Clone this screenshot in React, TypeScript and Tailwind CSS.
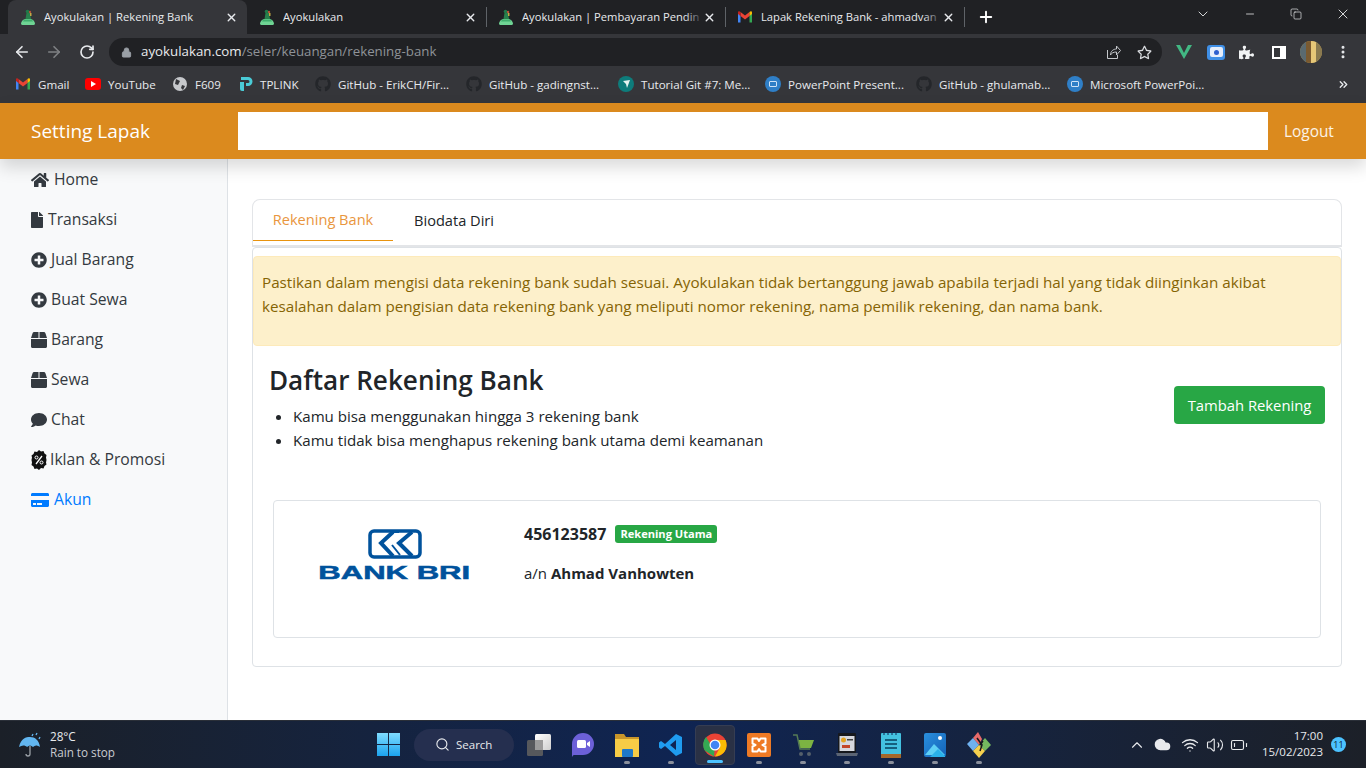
import React from "react";
import { FaHome, FaFile, FaPlusCircle, FaBox, FaComment, FaCreditCard, FaGithub, FaPuzzlePiece, FaRegStar } from "react-icons/fa";
import { ArrowLeft, ArrowRight, RotateCw, Lock, X, Plus, ChevronDown, Minus, Copy, MoreVertical, ChevronsRight, Search, ChevronUp, Wifi, Volume2, BatteryLow, Cloud } from "lucide-react";

function Fav() {
  return (
    <svg width="16" height="16" viewBox="0 0 16 16" className="shrink-0">
      <path d="M1 15c0-2 1-3 2-4l2-1h6l2 1c1 1 2 2 2 4 0 .500-1 1-2 1H3c-1 0-2-.500-2-1z" fill="#6fd494" />
      <path d="M4 10.500h8l1 2H3z" fill="#3fae6c" />
      <path d="M5.500 10l1-6 3.500-.500 1 6.500z" fill="#27804c" />
      <circle cx="7.500" cy="2.500" r="1.800" fill="#1f7a48" />
      <circle cx="10" cy="3" r="1.200" fill="#b5533c" />
      <rect x="10" y="4" width="1.500" height="3" fill="#c2a745" />
    </svg>
  );
}
function GmailIcon() {
  return (
    <svg width="16" height="16" viewBox="0 0 16 16" className="shrink-0">
      <path d="M1 3.500v10h2.500V7L1 3.500z" fill="#4285f4" />
      <path d="M15 3.500v10h-2.500V7L15 3.500z" fill="#34a853" />
      <path d="M3.500 7V3L8 6.500 12.500 3v4L8 10.500 3.500 7z" fill="#ea4335" />
      <path d="M1 3.500C1 2.200 2.500 1.800 3.500 3v4L1 5z" fill="#c5221f" />
      <path d="M15 3.500c0-1.300-1.500-1.700-2.500-.5v4L15 5z" fill="#fbbc04" />
    </svg>
  );
}
function Tab({ title, active, fav, sep, fade }: { title: string; active?: boolean; fav: React.ReactNode; sep?: boolean; fade?: boolean }) {
  return (
    <div className={`w-[239px] flex items-center relative pl-[12px] pr-[9px] gap-[8px] shrink-0 ${active ? "self-end h-[34px] bg-[#35363a] rounded-t-[8px]" : "h-[26px]"}`}>
      {fav}
      <div className="flex-1 relative overflow-hidden whitespace-nowrap text-[11.200px] text-[#e8eaed]">
        {title}
        {fade && <div className="absolute right-0 top-0 bottom-0 w-[18px] bg-gradient-to-r from-transparent to-[#202124]" />}
      </div>
      <X size={13} strokeWidth={2.500} className="text-[#e8eaed] shrink-0 ml-[-8px]" />
      {sep && <div className="absolute right-[-1px] top-[3px] h-[20px] w-px bg-[#5f6368]" />}
    </div>
  );
}
function Bookmark({ icon, label, w }: { icon: React.ReactNode; label: string; w: string }) {
  return (
    <div className={`flex items-center gap-[7px] shrink-0 ${w}`}>
      {icon}
      <span className="text-[11.600px] text-[#e8eaed] whitespace-nowrap">{label}</span>
    </div>
  );
}
function PP() {
  return (
    <div className="w-[16px] h-[16px] rounded-full bg-[#2f7fc7] flex items-center justify-center shrink-0">
      <div className="w-[8px] h-[6px] border border-[#cfe3f7] rounded-[1px]" />
    </div>
  );
}
const Gh = () => <FaGithub size={16} className="text-[#24262a] shrink-0" />;

function Side({ icon, label, gap, active }: { icon: React.ReactNode; label: string; gap: string; active?: boolean }) {
  return (
    <div className={`h-[40px] flex items-center pl-[31px] ${gap} text-[15.700px] font-medium ${active ? "text-[#007bff]" : "text-[#343a40]"}`}>
      {icon}
      <span>{label}</span>
    </div>
  );
}
function PromoIcon() {
  return (
    <svg width="16" height="20" viewBox="0 0 16 20" className="shrink-0">
      <path d="M8 0l2 1.500 2.500-.5 1 2.500 2 1.500-.5 2.500.5 2.500-.5 2.500.5 2-2 1.500-1 2.500-2.500-.5L8 20l-2-1.500-2.500.5-1-2.500-2-1.500.5-2.500-.5-2.500.5-2.500-.5-2 2-1.500 1-2.500 2.500.5z" fill="#111" />
      <circle cx="5.500" cy="7.500" r="1.500" fill="none" stroke="#fff" strokeWidth="1" />
      <circle cx="10.500" cy="12.500" r="1.500" fill="none" stroke="#fff" strokeWidth="1" />
      <path d="M11 6l-6 8" stroke="#fff" strokeWidth="1.300" />
    </svg>
  );
}
function BriLogo() {
  return (
    <div className="w-[151px] flex flex-col items-center">
      <svg width="54" height="30" viewBox="0 0 54 30">
        <rect x="2" y="2" width="50" height="26" rx="4" fill="#fff" stroke="#00529c" strokeWidth="3.500" />
        <path d="M25 3L13 14l12 13" fill="none" stroke="#00529c" strokeWidth="4" />
        <path d="M44 3L31 14l13 13" fill="none" stroke="#00529c" strokeWidth="4" />
        <path d="M25 3h6M24 16l8 10" fill="none" stroke="#00529c" strokeWidth="2" />
      </svg>
      <div className="w-full flex justify-center mt-[7px] h-[14px]">
        <span className="text-[18.500px] leading-[14px] font-bold text-[#00529c] whitespace-nowrap font-['Liberation_Sans',sans-serif] [transform:scaleX(1.680)] [-webkit-text-stroke:0.500px_#00529c]">BANK BRI</span>
      </div>
    </div>
  );
}
function TaskIcon({ children, active, dot = true }: { children: React.ReactNode; active?: boolean; dot?: boolean }) {
  return (
    <div className={`relative w-[40px] h-[40px] flex items-center justify-center shrink-0 rounded-[4px] ${active ? "bg-[#2a3145] border border-[#363d52]" : ""}`}>
      {children}
      {dot && <div className={`absolute bottom-[1px] left-1/2 -translate-x-1/2 h-[3px] rounded-full ${active ? "w-[16px] bg-[#4cc2ff]" : "w-[6px] bg-[#8a8f9b]"}`} />}
    </div>
  );
}

export default function App() {
  return (
    <div className="w-[1366px] h-[768px] overflow-hidden flex flex-col bg-white font-['Open_Sans','Noto_Sans',sans-serif]">
      {/* tabs */}
      <div className="h-[34px] bg-[#202124] flex items-end pl-[8px] shrink-0">
        <Tab title="Ayokulakan | Rekening Bank" active fav={<Fav />} />
        <div className="flex items-center h-[34px]">
          <Tab title="Ayokulakan" fav={<Fav />} sep />
          <Tab title="Ayokulakan | Pembayaran Pendin" fade fav={<Fav />} sep />
          <Tab title="Lapak Rekening Bank - ahmadvan" fade fav={<GmailIcon />} sep />
          <Plus size={18} strokeWidth={2.500} className="text-white ml-[13px]" />
        </div>
        <div className="flex-1" />
        <div className="flex items-center h-full self-start pb-[6px] text-[#f1f3f4]">
          <ChevronDown size={16} strokeWidth={1.300} className="mr-[33px]" />
          <Minus size={12} strokeWidth={1.500} className="mr-[34px]" />
          <Copy size={12} strokeWidth={1.300} className="mr-[33px]" />
          <X size={16} strokeWidth={1.300} className="mr-[15px]" />
        </div>
      </div>
      {/* toolbar */}
      <div className="h-[34px] pt-[2px] bg-[#35363a] flex items-center pl-[13px] shrink-0">
        <ArrowLeft size={18} strokeWidth={2.200} className="text-[#e8eaed]" />
        <ArrowRight size={18} strokeWidth={2.200} className="text-[#7f8184] ml-[14px]" />
        <RotateCw size={16} strokeWidth={2.500} className="text-[#e8eaed] ml-[16px]" />
        <div className="ml-[14px] w-[1053px] h-[28px] rounded-full bg-[#202124] flex items-center pl-[12px] pr-[10px] shrink-0">
          <Lock size={11} fill="#9aa0a6" className="text-[#9aa0a6]" />
          <span className="ml-[9px] text-[13.300px] text-[#e8eaed]">ayokulakan.com<span className="text-[#8f9398]">/seler/keuangan/rekening-bank</span></span>
          <div className="flex-1" />
          <svg width="16" height="16" viewBox="0 0 16 16" fill="none" stroke="#c4c7cb" strokeWidth="1"><path d="M2.500 6v8.500h10V11" /><path d="M5.500 11c0-4 3-6 6-6V2l4 4.500-4 4.500V8c-3 0-5 1-6 3z" /></svg>
          <FaRegStar size={15} className="text-[#dadce0] ml-[16px]" />
        </div>
        <svg width="16" height="14" viewBox="0 0 16 14" className="ml-[14px] shrink-0"><path d="M0 0h4l4 8 4-8h4L8 14z" fill="#42b883" /></svg>
        <div className="ml-[15px] w-[18px] h-[15px] bg-[#3f8fe6] rounded-[3px] flex items-center justify-center shrink-0"><div className="w-[13px] h-[10px] bg-[#e6eefb] rounded-[2px] flex items-center justify-center"><div className="w-[5px] h-[5px] rounded-full bg-[#2d5fcf]" /></div></div>
        <FaPuzzlePiece size={15} className="text-[#f1f3f4] ml-[14px] shrink-0" />
        <div className="ml-[18px] w-[14px] h-[13px] border-[2px] border-white border-r-[6px] shrink-0" />
        <div className="ml-[14px] w-[22px] h-[22px] rounded-full bg-[#b99850] overflow-hidden flex shrink-0"><div className="w-[6px] bg-[#5a6a70]" /><div className="w-[5px] bg-[#7a5a30]" /><div className="w-[5px] bg-[#e6c777]" /><div className="flex-1 bg-[#8a7a50]" /></div>
        <MoreVertical size={16} strokeWidth={2.500} className="text-[#e8eaed] ml-[13px] shrink-0" />
      </div>
      {/* bookmarks */}
      <div className="h-[35px] pb-[2px] bg-[#35363a] flex items-center pl-[15px] pr-[16px] shrink-0">
        <Bookmark w="w-[70px]" icon={<GmailIcon />} label="Gmail" />
        <Bookmark w="w-[87px]" icon={<svg width="16" height="12" viewBox="0 0 16 12"><rect width="16" height="12" rx="3" fill="#f00" /><path d="M6 3l5 3-5 3z" fill="#fff" /></svg>} label="YouTube" />
        <Bookmark w="w-[65px]" icon={<svg width="16" height="16" viewBox="0 0 16 16"><circle cx="8" cy="8" r="7" fill="#c6c8cb" /><path d="M4 3l4 2-2 4-3-1zM10 9l3 1-2 4-2-2z" fill="#35363a" /></svg>} label="F609" />
        <Bookmark w="w-[78px]" icon={<svg width="16" height="16" viewBox="0 0 16 16"><path d="M4 1h7a4 4 0 0 1 0 9H9V7h2a1 1 0 0 0 0-3H4zM3 6h4v9H5a2 2 0 0 1-2-2z" fill="#4acbd6" /></svg>} label="TPLINK" />
        <Bookmark w="w-[151px]" icon={<Gh />} label="GitHub - ErikCH/Fir..." />
        <Bookmark w="w-[152px]" icon={<Gh />} label="GitHub - gadingnst..." />
        <Bookmark w="w-[147px]" icon={<svg width="16" height="16" viewBox="0 0 16 16"><circle cx="8" cy="8" r="8" fill="#0e7c7b" /><path d="M5 5l7-1-3 8-1-4z" fill="#e6f4f1" /></svg>} label="Tutorial Git #7: Me..." />
        <Bookmark w="w-[151px]" icon={<PP />} label="PowerPoint Present..." />
        <Bookmark w="w-[151px]" icon={<Gh />} label="GitHub - ghulamab..." />
        <Bookmark w="w-[152px]" icon={<PP />} label="Microsoft PowerPoi..." />
        <div className="flex-1" />
        <ChevronsRight size={13} strokeWidth={2.500} className="text-[#e8eaed]" />
      </div>
      {/* header */}
      <div className="h-[56px] bg-[#db8a1e] flex items-center relative z-10 shadow-[0_8px_16px_rgba(0,0,0,0.15)] shrink-0">
        <div className="w-[238px] pl-[31px] pt-px text-[19px] text-white">Setting Lapak</div>
        <div className="w-[1030px] h-[38px] bg-white" />
        <div className="flex-1 pl-[16px] pt-[2px] text-[15.400px] text-white/90">Logout</div>
      </div>
      <div className="flex-1 flex min-h-0">
        <aside className="w-[228px] pt-px bg-[#f8f9fa] border-r border-[#dee2e6] shrink-0">
          <Side icon={<FaHome size={18} />} label="Home" gap="gap-[5px]" />
          <Side icon={<FaFile className="w-[12px] h-[16px]" />} label="Transaksi" gap="gap-[5px]" />
          <Side icon={<FaPlusCircle size={16} />} label="Jual Barang" gap="gap-[4px]" />
          <Side icon={<FaPlusCircle size={16} />} label="Buat Sewa" gap="gap-[4px]" />
          <Side icon={<FaBox size={16} />} label="Barang" gap="gap-[4px]" />
          <Side icon={<FaBox size={16} />} label="Sewa" gap="gap-[4px]" />
          <Side icon={<FaComment size={16} />} label="Chat" gap="gap-[4px]" />
          <Side icon={<PromoIcon />} label="Iklan & Promosi" gap="gap-[3px]" />
          <Side icon={<FaCreditCard size={18} />} label="Akun" gap="gap-[5px]" active />
        </aside>
        <main className="flex-1 pl-[24px] pr-[24px] pt-[40px]">
          <div className="h-[48px] flex border border-[#e3e5e8] rounded-t-[8px] border-b-2">
            <div className="w-[140px] h-[41px] flex items-center justify-center border-b border-[#e8930f] text-[#e9963e] text-[14.600px] font-medium shrink-0">Rekening Bank</div>
            <div className="w-[122px] h-[41px] flex items-center justify-center text-[#212529] text-[14.600px] font-medium shrink-0">Biodata Diri</div>
          </div>
          <div className="h-[420px] border border-[#dee2e6] rounded-[4px] flex flex-col pt-[8px]">
            <div className="h-[90px] bg-[#fdf0cb] border border-[#fdeaba] rounded-[4px] pl-[8px] pt-[13px] text-[15.200px] leading-[24px] text-[#856404] shrink-0 whitespace-nowrap">
              Pastikan dalam mengisi data rekening bank sudah sesuai. Ayokulakan tidak bertanggung jawab apabila terjadi hal yang tidak diinginkan akibat<br />kesalahan dalam pengisian data rekening bank yang meliputi nomor rekening, nama pemilik rekening, dan nama bank.
            </div>
            <div className="flex items-center pl-[16px] pr-[16px] pt-[17px]">
              <div className="flex-1">
                <h1 className="text-[26.100px] leading-[34px] font-semibold text-[#212529]">Daftar Rekening Bank</h1>
                <ul className="list-disc pl-[24px] mt-[7px] text-[15.100px] leading-[24px] text-[#212529]">
                  <li>Kamu bisa menggunakan hingga 3 rekening bank</li>
                  <li>Kamu tidak bisa menghapus rekening bank utama demi keamanan</li>
                </ul>
              </div>
              <div className="bg-[#28a745] text-white text-[14.800px] rounded-[4px] w-[151px] h-[38px] mt-[-5px] flex items-center justify-center shrink-0">Tambah Rekening</div>
            </div>
            <div className="mx-[20px] mt-[48px] h-[138px] border border-[#dee2e6] rounded-[4px] flex">
              <div className="w-[250px] pl-[45px] pt-[28px] shrink-0"><BriLogo /></div>
              <div className="pt-[22px] text-[15px] leading-[22px] text-[#212529]">
                <div className="flex items-center h-[22px]">
                  <b className="font-bold text-[16px]">456123587</b>
                  <span className="ml-[9px] bg-[#28a745] text-white text-[11.100px] font-bold rounded-[3px] h-[18px] w-[102px] flex items-center justify-center whitespace-nowrap">Rekening Utama</span>
                </div>
                <div className="mt-[17px]">a/n <b>Ahmad Vanhowten</b></div>
              </div>
            </div>
          </div>
        </main>
      </div>
      {/* taskbar */}
      <div className="h-[48px] bg-gradient-to-r from-[#1b2028] via-[#0f2452] to-[#1c2028] flex items-center relative shrink-0 border-t border-[#2a2f38]">
        <div className="w-[377px] pl-[18px] flex items-center shrink-0">
          <svg width="24" height="26" viewBox="0 0 24 26"><path d="M1 15c2-9 7-10 11-10 5 0 9 3 10 10-3-2-5-2-7 0-2-2-4-2-6 0-2-2-5-2-8 0z" fill="#62b6f0" /><path d="M12 14v8a2 2 0 0 1-4 0" fill="none" stroke="#9aa0a6" strokeWidth="1.300" /><path d="M15 2l-1 2M19 1l-1 2M22 5l-1 2" stroke="#62b6f0" strokeWidth="1.300" /></svg>
          <div className="ml-[8px] text-[11.700px] leading-[16px] text-[#e8eaed] mt-[-1px]"><div>28°C</div><div className="text-[#c9ccd1]">Rain to stop</div></div>
        </div>
        <svg width="23" height="23" viewBox="0 0 24 24" className="shrink-0"><defs><linearGradient id="w" x1="0" y1="0" x2="0" y2="1"><stop offset="0" stopColor="#7fdcff" /><stop offset="1" stopColor="#1ba3ee" /></linearGradient></defs><path d="M0 0h11.500v11.500H0zM12.500 0H24v11.500H12.500zM0 12.500h11.500V24H0zM12.500 12.500H24V24H12.500z" fill="url(#w)" /></svg>
        <div className="ml-[14px] w-[100px] h-[32px] rounded-full bg-[#252f4f] flex items-center pl-[21px] gap-[6px] text-[11.500px] text-[#e8eaed] shrink-0"><Search size={15} strokeWidth={1.800} /><span>Search</span></div>
        <div className="ml-[5px] flex items-center gap-[4px]">
          <TaskIcon dot={false}>
            <svg width="24" height="22" viewBox="0 0 24 22"><defs><linearGradient id="tv" x1="0" y1="0" x2="1" y2="1"><stop offset="0" stopColor="#ffffff" /><stop offset="1" stopColor="#cfcfcf" /></linearGradient></defs><rect x="8" y="0" width="16" height="16" rx="1.500" fill="url(#tv)" /><rect x="0" y="6" width="16" height="16" rx="1.500" fill="#5e5e5e" fillOpacity="0.900" /><rect x="8" y="6" width="8" height="10" fill="#9b9b9b" /></svg>
          </TaskIcon>
          <TaskIcon dot={false}>
            <svg width="24" height="26" viewBox="0 0 24 26"><path d="M12 1a11 11 0 0 1 0 22H3c-1 0-1.500 1.500-2 2 0-2 0-5 0-13A11 11 0 0 1 12 1z" fill="#6c60d8" /><rect x="6" y="8" width="9" height="8" rx="1.500" fill="#fff" /><path d="M16 11l3-2v6l-3-2z" fill="#fff" /></svg>
          </TaskIcon>
          <TaskIcon><svg width="24" height="24" viewBox="0 0 24 24"><path d="M0 1h9l2 3h13v20H0z" fill="#c9962a" /><path d="M0 6h24v18H0z" fill="#f7cc46" /><rect x="7" y="16" width="11" height="8" rx="1" fill="#1f78c8" /></svg></TaskIcon>
          <TaskIcon><svg width="24" height="24" viewBox="0 0 24 24"><path d="M17 1l6 3v16l-6 3L6 13l-4 3-2-1.500V9.500L2 8l4 3zM17 7l-6 5 6 5z" fill="#1f9cf0" fillRule="evenodd" /></svg></TaskIcon>
          <TaskIcon active><svg width="24" height="24" viewBox="0 0 24 24"><circle cx="12" cy="12" r="11.500" fill="#ea4335" /><path d="M1.800 17.500A11.500 11.500 0 0 1 3 4l5 8 4 0-1 11.500z" fill="#34a853" /><path d="M12 7h10.500A11.500 11.500 0 0 1 12 23.500l5-9z" fill="#fbbc04" /><circle cx="12" cy="12" r="5.500" fill="#fff" /><circle cx="12" cy="12" r="4.300" fill="#4285f4" /></svg></TaskIcon>
          <TaskIcon><svg width="24" height="24" viewBox="0 0 24 24"><rect width="24" height="24" rx="2" fill="#ee7a25" /><path d="M5.500 5.500h5l1.500 2.500 1.500-2.500h5v5l-3 1.500 3 1.500v5h-5L12 16l-1.500 2.500h-5v-5l3-1.500-3-1.500z" fill="none" stroke="#fff" strokeWidth="2" strokeLinejoin="round" /></svg></TaskIcon>
          <TaskIcon><svg width="22" height="24" viewBox="0 0 22 24"><path d="M6 7h16l-3 8H8z" fill="#7cb342" /><path d="M1 2h4l3 14h10" fill="none" stroke="#557a55" strokeWidth="1.500" /><circle cx="9" cy="21" r="2" fill="#55606b" /><circle cx="17" cy="21" r="2" fill="#55606b" /></svg></TaskIcon>
          <TaskIcon><svg width="22" height="24" viewBox="0 0 22 24"><rect x="2" y="0" width="18" height="20" rx="1" fill="#16181d" /><rect x="3.500" y="3" width="15" height="15" fill="#d6d8de" /><circle cx="7.500" cy="7" r="2.500" fill="#e3a422" /><rect x="6" y="12" width="8" height="3" fill="#c3472a" /><rect x="11" y="6" width="6" height="1.500" fill="#444" /><path d="M0 20h22l-1 3H1z" fill="#5b6474" /></svg></TaskIcon>
          <TaskIcon><svg width="20" height="26" viewBox="0 0 20 26"><rect y="1" width="20" height="25" rx="1" fill="#43c1e0" /><rect y="22" width="20" height="4" fill="#a5682a" /><path d="M3 0v3M7 0v3M11 0v3M15 0v3" stroke="#0f2452" strokeWidth="1" /><path d="M4 8h12M4 12h12M4 16h12" stroke="#15607e" strokeWidth="2" /></svg></TaskIcon>
          <TaskIcon><svg width="22" height="24" viewBox="0 0 22 24"><defs><linearGradient id="ph" x1="0" y1="0" x2="1" y2="1"><stop offset="0" stopColor="#2a8fdd" /><stop offset="1" stopColor="#1463b8" /></linearGradient></defs><rect width="22" height="24" rx="2" fill="url(#ph)" /><path d="M1 22l9-11 11 11z" fill="#5ed0f5" /><path d="M6 24l8-8 7 7v1z" fill="#2ab2ea" /><circle cx="16" cy="5" r="2" fill="#fff" /></svg></TaskIcon>
          <TaskIcon><svg width="24" height="26" viewBox="0 0 24 26"><path d="M12 13L6 6l5-6 4 7z" fill="#e86a6a" /><path d="M12 13L6 6 0 12l6 7z" fill="#6fb1f0" /><path d="M12 13l6-7 6 7-6 6z" fill="#74b95f" /><path d="M12 13l-6 6 6 7 6-7z" fill="#f5d04e" /><path d="M10 6l5 7-2 6M16 9l-3 4" fill="none" stroke="#16181d" strokeWidth="1.500" /></svg></TaskIcon>
        </div>
        <div className="flex-1" />
        <div className="flex items-center text-[#e8eaed] pr-[20px]">
          <ChevronUp size={18} strokeWidth={1.500} />
          <Cloud size={17} fill="#e8eaed" className="ml-[8px]" />
          <Wifi size={18} strokeWidth={1.700} className="ml-[10px]" />
          <Volume2 size={18} strokeWidth={1.500} className="ml-[7px]" />
          <BatteryLow size={18} strokeWidth={1.500} className="ml-[6px]" />
          <div className="ml-[3px] w-[72px] text-right text-[11.500px] leading-[16px] mt-[-1px]"><div>17:00</div><div>15/02/2023</div></div>
          <div className="ml-[8px] w-[15px] h-[15px] rounded-full bg-[#4cc2ff] text-[#0b1b33] text-[9px] flex items-center justify-center">11</div>
        </div>
      </div>
    </div>
  );
}
